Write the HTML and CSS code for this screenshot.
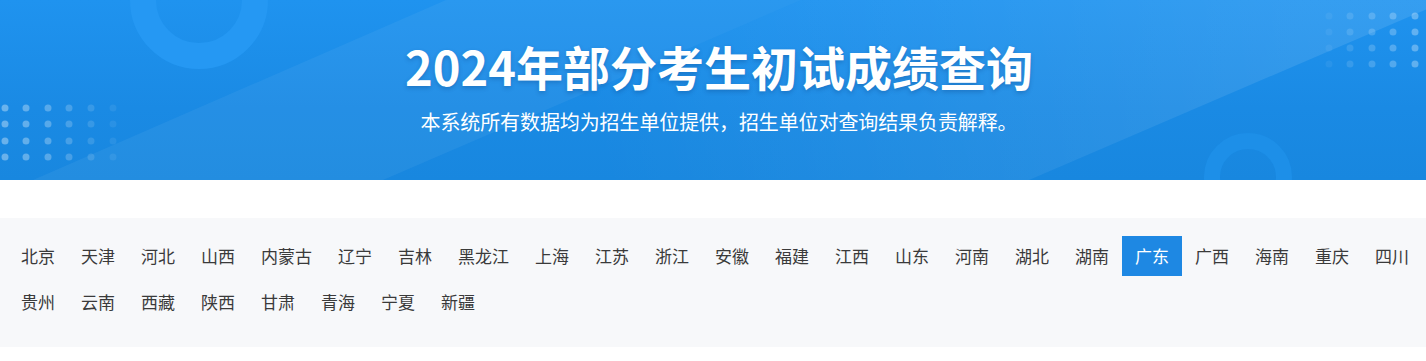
FILE: index.html
```html
<!DOCTYPE html>
<html lang="zh-CN">
<head>
<meta charset="utf-8">
<title>2024年部分考生初试成绩查询</title>
<link rel="stylesheet" href="styles.css">
</head>
<body>
<header class="banner">
  <svg class="banner-bg" viewBox="0 0 1426 180" preserveAspectRatio="none" aria-hidden="true">
    <defs>
      <linearGradient id="bandY" x1="1300" y1="0" x2="600" y2="180" gradientUnits="userSpaceOnUse">
        <stop offset="0" stop-color="#fff" stop-opacity="0.10"/>
        <stop offset="1" stop-color="#fff" stop-opacity="0.0"/>
      </linearGradient>
    </defs>
    <polygon points="33,180 446,0 801,0 383,180" fill="#fff" fill-opacity="0.05"/>
    <polygon points="801,0 1448,0 1029,180 383,180" fill="url(#bandY)"/>
    <circle cx="199" cy="0" r="56" fill="none" stroke="#2598f3" stroke-width="26"/>
    <circle cx="1248" cy="177" r="36" fill="none" stroke="#1d8fe8" stroke-width="16"/>
    <g fill="#fff">
      <g fill-opacity="0.35">
        <circle cx="5" cy="108" r="3.5"/><circle cx="5" cy="124" r="3.5"/><circle cx="5" cy="141" r="3.5"/><circle cx="5" cy="157" r="3.5"/>
      </g>
      <g fill-opacity="0.32">
        <circle cx="26" cy="108" r="3.5"/><circle cx="26" cy="124" r="3.5"/><circle cx="26" cy="141" r="3.5"/><circle cx="26" cy="157" r="3.5"/>
      </g>
      <g fill-opacity="0.27">
        <circle cx="48" cy="108" r="3.5"/><circle cx="48" cy="124" r="3.5"/><circle cx="48" cy="141" r="3.5"/><circle cx="48" cy="157" r="3.5"/>
      </g>
      <g fill-opacity="0.2">
        <circle cx="69" cy="108" r="3.5"/><circle cx="69" cy="124" r="3.5"/><circle cx="69" cy="141" r="3.5"/><circle cx="69" cy="157" r="3.5"/>
      </g>
      <g fill-opacity="0.13">
        <circle cx="91" cy="108" r="3.5"/><circle cx="91" cy="124" r="3.5"/><circle cx="91" cy="141" r="3.5"/><circle cx="91" cy="157" r="3.5"/>
      </g>
      <g fill-opacity="0.07">
        <circle cx="113" cy="108" r="3.5"/><circle cx="113" cy="124" r="3.5"/><circle cx="113" cy="141" r="3.5"/><circle cx="113" cy="157" r="3.5"/>
      </g>
      <g fill-opacity="0.06">
        <circle cx="1329" cy="16" r="3.5"/><circle cx="1329" cy="32" r="3.5"/><circle cx="1329" cy="48" r="3.5"/><circle cx="1329" cy="64" r="3.5"/>
      </g>
      <g fill-opacity="0.12">
        <circle cx="1350" cy="16" r="3.5"/><circle cx="1350" cy="32" r="3.5"/><circle cx="1350" cy="48" r="3.5"/><circle cx="1350" cy="64" r="3.5"/>
      </g>
      <g fill-opacity="0.18">
        <circle cx="1372" cy="16" r="3.5"/><circle cx="1372" cy="32" r="3.5"/><circle cx="1372" cy="48" r="3.5"/><circle cx="1372" cy="64" r="3.5"/>
      </g>
      <g fill-opacity="0.24">
        <circle cx="1393" cy="16" r="3.5"/><circle cx="1393" cy="32" r="3.5"/><circle cx="1393" cy="48" r="3.5"/><circle cx="1393" cy="64" r="3.5"/>
      </g>
      <g fill-opacity="0.3">
        <circle cx="1415" cy="16" r="3.5"/><circle cx="1415" cy="32" r="3.5"/><circle cx="1415" cy="48" r="3.5"/><circle cx="1415" cy="64" r="3.5"/>
      </g>
    </g>
  </svg>
  <h1 class="banner-title">2024年部分考生初试成绩查询</h1>
  <p class="banner-sub">本系统所有数据均为招生单位提供，招生单位对查询结果负责解释。</p>
</header>

<nav class="provinces">
  <a class="prov">北京</a>
  <a class="prov">天津</a>
  <a class="prov">河北</a>
  <a class="prov">山西</a>
  <a class="prov">内蒙古</a>
  <a class="prov">辽宁</a>
  <a class="prov">吉林</a>
  <a class="prov">黑龙江</a>
  <a class="prov">上海</a>
  <a class="prov">江苏</a>
  <a class="prov">浙江</a>
  <a class="prov">安徽</a>
  <a class="prov">福建</a>
  <a class="prov">江西</a>
  <a class="prov">山东</a>
  <a class="prov">河南</a>
  <a class="prov">湖北</a>
  <a class="prov">湖南</a>
  <a class="prov active">广东</a>
  <a class="prov">广西</a>
  <a class="prov">海南</a>
  <a class="prov">重庆</a>
  <a class="prov">四川</a>
  <a class="prov">贵州</a>
  <a class="prov">云南</a>
  <a class="prov">西藏</a>
  <a class="prov">陕西</a>
  <a class="prov">甘肃</a>
  <a class="prov">青海</a>
  <a class="prov">宁夏</a>
  <a class="prov">新疆</a>
</nav>
</body>
</html>
```

FILE: styles.css
```css
* {
  box-sizing: border-box;
}

html, body {
  margin: 0;
  padding: 0;
  background: #ffffff;
  font-family: "Noto Sans CJK SC", "Noto Sans", "Liberation Sans", sans-serif;
}

.banner {
  position: relative;
  height: 180px;
  overflow: hidden;
  background: linear-gradient(180deg, #1f93ef 0%, #1a8ae4 60%, #1887df 100%);
  display: flex;
  flex-direction: column;
  align-items: center;
  padding-top: 42px;
  padding-left: 12px;
}

.banner-bg {
  position: absolute;
  left: 0;
  top: 0;
  width: 100%;
  height: 100%;
}

.banner-title {
  position: relative;
  margin: 0;
  font-size: 47px;
  line-height: 48px;
  font-weight: 700;
  color: #ffffff;
  text-shadow: 0 2px 4px rgba(0, 40, 100, 0.25);
}

.banner-sub {
  position: relative;
  margin: 22px 0 0 0;
  font-size: 20px;
  line-height: 20px;
  color: #ffffff;
  letter-spacing: -0.1px;
}

.provinces {
  margin-top: 38px;
  background: #f7f8fa;
  padding: 18px 4px 19px 8px;
  display: flex;
  flex-wrap: wrap;
}

.prov {
  display: block;
  height: 40px;
  line-height: 40px;
  padding: 0 13px;
  margin-bottom: 6px;
  font-size: 17px;
  color: #3a3a3a;
  cursor: pointer;
  white-space: nowrap;
}

.prov.active {
  background: #1e88e3;
  color: #ffffff;
}
```
